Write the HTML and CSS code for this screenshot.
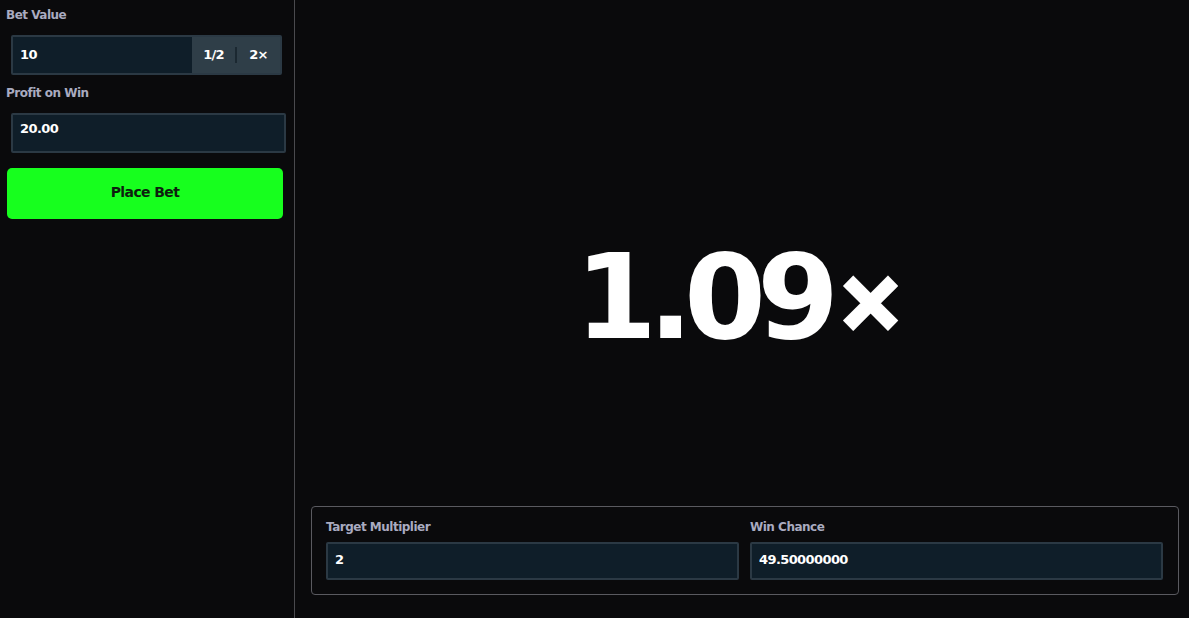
FILE: index.html
```html
<!DOCTYPE html>
<html lang="en">
<head>
    <meta charset="UTF-8">
    <meta name="viewport" content="width=device-width, initial-scale=1.0">
    <title>Limbo</title>
    <link rel="stylesheet" href="styles.css">
</head>
<body>
    <div class="app">
        <aside class="sidebar">
            <label class="label" for="betValue">Bet Value</label>
            <div class="bet-field">
                <input class="bet-input" type="text" id="betValue" value="10">
                <div class="bet-actions">
                    <button type="button" class="bet-btn">1/2</button>
                    <span class="bet-divider"></span>
                    <button type="button" class="bet-btn">2×</button>
                </div>
            </div>

            <label class="label" for="profit">Profit on Win</label>
            <input class="field profit" type="text" id="profit" value="20.00" readonly>

            <button type="button" class="place-bet">Place Bet</button>
        </aside>

        <main class="game">
            <div class="stage">
                <div class="multiplier">1.09<span class="times">×</span></div>
            </div>

            <div class="panel">
                <div class="panel-col">
                    <label class="label" for="target">Target Multiplier</label>
                    <input class="field" type="text" id="target" value="2">
                </div>
                <div class="panel-col">
                    <label class="label" for="chance">Win Chance</label>
                    <input class="field" type="text" id="chance" value="49.50000000">
                </div>
            </div>
        </main>
    </div>
</body>
</html>
```

FILE: styles.css
```css
* {
    box-sizing: border-box;
}
body {
    margin: 0;
    background-color: #0a0a0c;
    font-family: "DejaVu Sans", "Liberation Sans", sans-serif;
    color: #fff;
}
.app {
    display: flex;
    height: 618px;
}
.sidebar {
    width: 295px;
    flex-shrink: 0;
    border-right: 1px solid #4a4a4e;
    padding: 6px 12px 0 6px;
    display: flex;
    flex-direction: column;
}
.label {
    display: block;
    font-size: 12px;
    font-weight: bold;
    letter-spacing: -0.5px;
    color: #a9abc0;
    line-height: 18px;
}
.bet-field {
    display: flex;
    height: 40px;
    margin: 11px 0 9px 5px;
    border: 2px solid #2b3944;
    border-radius: 2px;
    background: #2f3e48;
}
.bet-input {
    flex: 1;
    min-width: 0;
    height: 100%;
    background: #0f1e29;
    border: none;
    outline: none;
    color: #fff;
    font-family: inherit;
    font-size: 13px;
    font-weight: bold;
    letter-spacing: -0.6px;
    padding: 0 7px 2px;
}
.bet-actions {
    display: flex;
    align-items: center;
    width: 88px;
}
.bet-btn {
    flex: 1;
    background: none;
    border: none;
    color: #fff;
    font-family: inherit;
    font-size: 13px;
    font-weight: bold;
    letter-spacing: -0.8px;
    cursor: pointer;
    padding: 0 0 2px;
}
.bet-divider {
    width: 2px;
    height: 16px;
    background: #1b2831;
}
.field {
    display: block;
    width: 100%;
    height: 40px;
    background: #0f1e29;
    border: 2px solid #2b3944;
    border-radius: 2px;
    outline: none;
    color: #fff;
    font-family: inherit;
    font-size: 13px;
    font-weight: bold;
    letter-spacing: -0.6px;
    padding: 0 7px 4px;
}
.profit {
    width: auto;
    margin: 11px -4px 15px 5px;
    padding-bottom: 9px;
}
.place-bet {
    height: 51px;
    margin: 0 -1px 0 1px;
    background-color: #17ff1e;
    border: none;
    border-radius: 5px;
    color: #0d1f0e;
    font-family: inherit;
    font-size: 14px;
    font-weight: bold;
    letter-spacing: -0.6px;
    cursor: pointer;
    padding-bottom: 4px;
}
.game {
    flex: 1;
    display: flex;
    flex-direction: column;
    padding: 0 10px 23px 16px;
}
.stage {
    flex: 1;
    display: flex;
    align-items: center;
    justify-content: center;
    padding: 88px 10px 0 0;
}
.multiplier {
    font-size: 118px;
    font-weight: bold;
    letter-spacing: -9px;
    line-height: 1;
    color: #fff;
}
.times {
    display: inline-block;
    font-size: 82px;
    letter-spacing: 0;
    margin-left: 6px;
    vertical-align: 9px;
    -webkit-text-stroke: 5px #fff;
}
.panel {
    display: flex;
    gap: 11px;
    height: 89px;
    border: 1px solid #5a5a60;
    border-radius: 4px;
    padding: 11px 15px 0 14px;
}
.panel-col {
    flex: 1;
}
.panel-col .field {
    height: 38px;
    margin-top: 6px;
}
```
